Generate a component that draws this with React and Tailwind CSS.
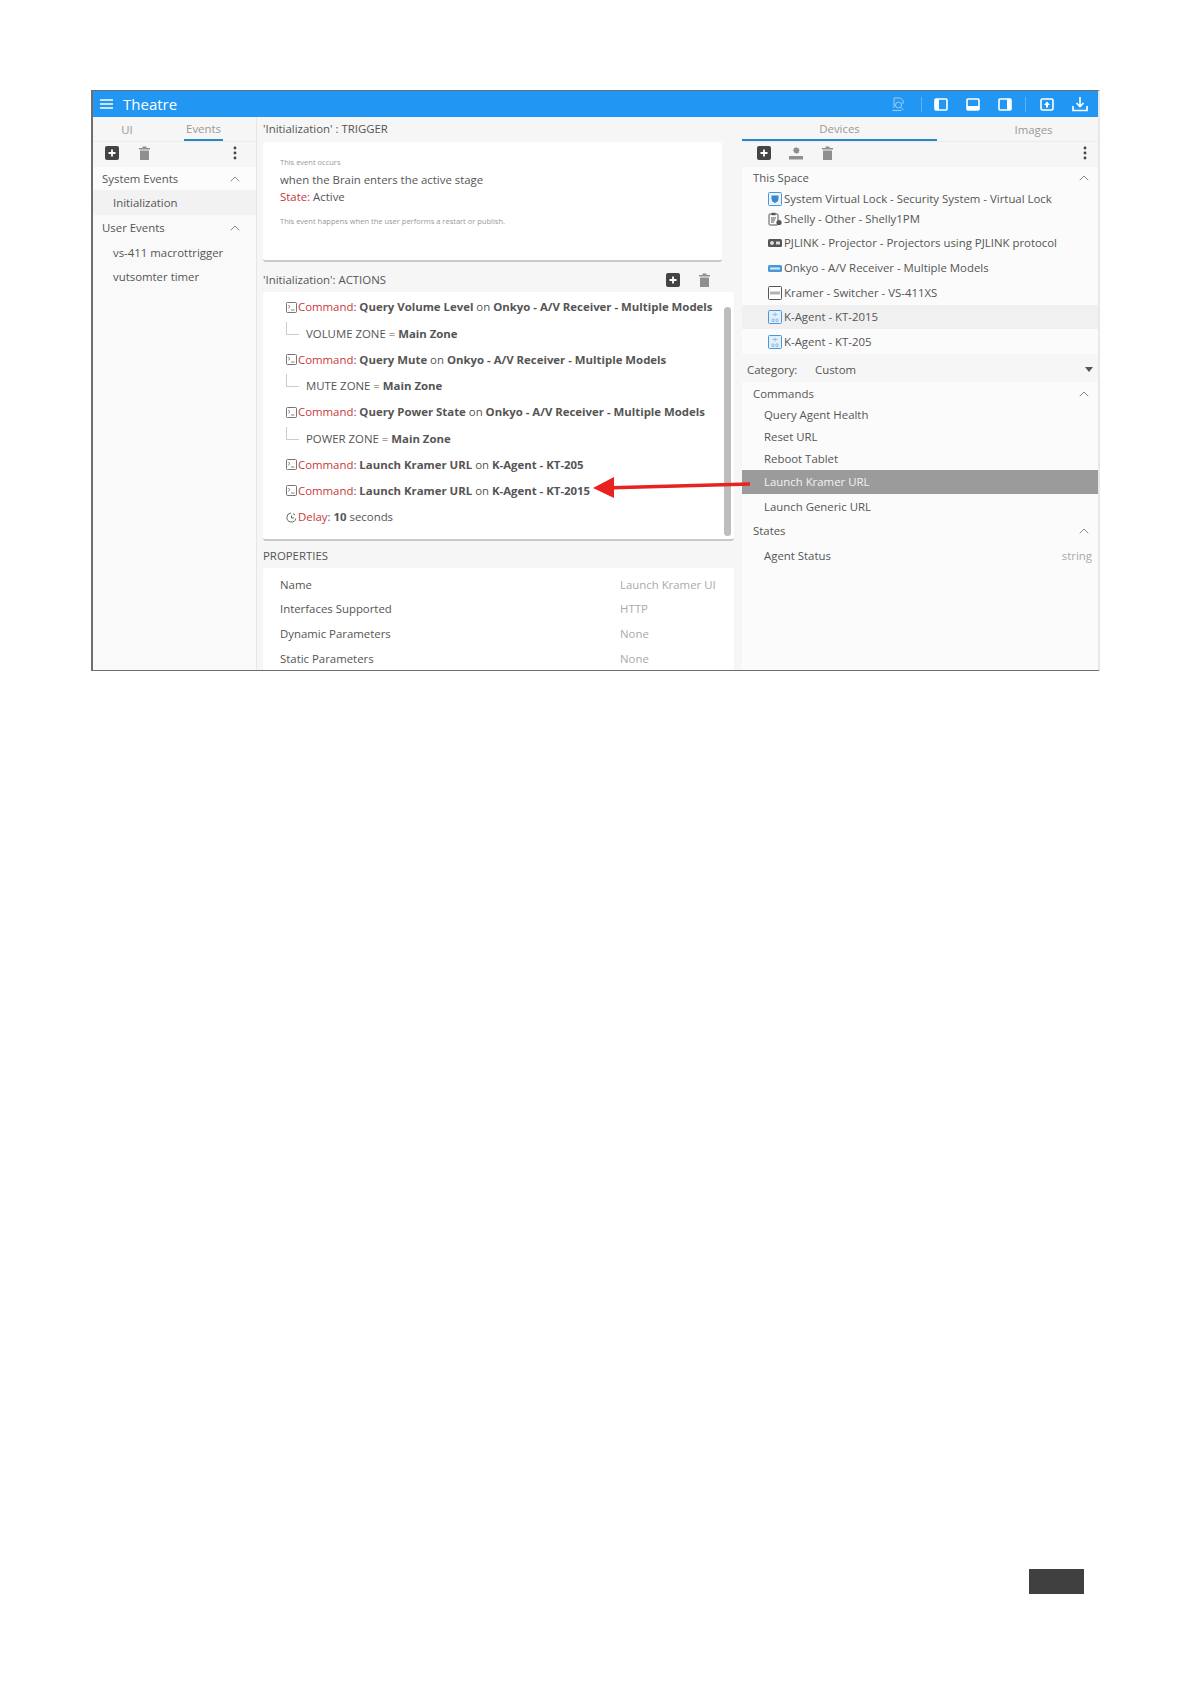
import React from "react";
import { ChevronUp } from "lucide-react";

const Plus = ({ cls = "" }) => (
  <svg width="14" height="14" viewBox="0 0 14 14" className={cls}>
    <rect width="14" height="14" rx="2" fill="#444" />
    <path d="M7 3.5v7M3.5 7h7" stroke="#fff" strokeWidth="1.8" />
  </svg>
);
const Trash = () => (
  <svg width="11" height="14" viewBox="0 0 11 14">
    <path d="M0 2h11v1.5H0zM3.5 0.5h4V2h-4zM1 4.5h9V14H1z" fill="#8f8f8f" />
  </svg>
);
const Dots = () => (
  <svg width="4" height="14" viewBox="0 0 4 14">
    <circle cx="2" cy="2" r="1.4" fill="#444" />
    <circle cx="2" cy="7" r="1.4" fill="#444" />
    <circle cx="2" cy="12" r="1.4" fill="#444" />
  </svg>
);
const Chev = () => <ChevronUp size={16} strokeWidth={1.5} className="text-[#8a8a8a]" />;
const Term = () => (
  <svg width="11" height="11" viewBox="0 0 11 11" className="shrink-0">
    <rect x=".5" y=".5" width="10" height="10" rx="1" fill="none" stroke="#666" strokeWidth=".9" />
    <path d="M2.2 3.2l1.8 1.5-1.8 1.5" fill="none" stroke="#666" strokeWidth=".8" />
    <path d="M5 8h3.5" fill="none" stroke="#666" strokeWidth=".8" />
  </svg>
);
const Clock = () => (
  <svg width="11" height="11" viewBox="0 0 11 11" className="shrink-0">
    <path d="M9.8 6.5A4.5 4.5 0 1 1 5 1" fill="none" stroke="#666" />
    <path d="M7 1.5l2 1.5M5.5 3.5v2.5H8" fill="none" stroke="#666" />
  </svg>
);
const Branch = () => (
  <div className="w-[13px] h-[13px] border-l border-b border-[#ccc] shrink-0 -mt-[10px]" />
);

const Row = ({ children }) => (
  <div className="flex items-center h-[26.25px] whitespace-nowrap pl-[23px]">{children}</div>
);
const Cmd = ({ name, on }) => (
  <Row>
    <Term />
    <span className="ml-[1px] text-[#c8383a]">Command</span>
    <span>:&nbsp;</span>
    <b className="font-bold">{name}</b>
    <span>&nbsp;on&nbsp;</span>
    <b className="font-bold">{on}</b>
  </Row>
);
const Sub = ({ k }) => (
  <Row>
    <Branch />
    <span className="ml-[7px]">{k} = </span>
    <b className="font-bold">&nbsp;Main Zone</b>
  </Row>
);

const Head = ({ children, h = "h-[24px]" }) => (
  <div className={`flex items-center justify-between ${h} pl-[11px] pr-[6px]`}>
    <span>{children}</span>
    <Chev />
  </div>
);

const Dev = ({ icon, children, h, active }) => (
  <div className={`flex items-center pl-[26px] ${h} ${active ? "bg-[#f0f0f0]" : ""}`}>
    <span className="w-[14px] h-[14px] mr-[2px] flex items-center justify-center shrink-0">{icon}</span>
    <span className="whitespace-nowrap">{children}</span>
  </div>
);
const Shield = (
  <svg width="14" height="14" viewBox="0 0 14 14">
    <rect x=".5" y=".5" width="13" height="13" rx="1" fill="#eaf3fb" stroke="#4a97d8" />
    <path d="M3.5 3.5h7v3.5c0 2-1.7 3-3.5 4-1.8-1-3.5-2-3.5-4z" fill="#3f86c6" />
  </svg>
);
const Clip = (
  <svg width="14" height="14" viewBox="0 0 14 14">
    <rect x="1" y="2" width="9" height="11" rx="1" fill="none" stroke="#555" />
    <rect x="3.5" y=".8" width="4" height="2.4" fill="#555" />
    <path d="M3 6h5M3 8h4M3 10h3" stroke="#555" />
    <circle cx="11" cy="10.5" r="2.6" fill="#555" />
  </svg>
);
const Proj = (
  <svg width="14" height="8" viewBox="0 0 14 8">
    <rect width="14" height="8" rx="1.5" fill="#555" />
    <circle cx="4" cy="4" r="2" fill="#ddd" />
    <rect x="8" y="2.5" width="4" height="3" fill="#ddd" />
  </svg>
);
const Recv = (
  <svg width="14" height="7" viewBox="0 0 14 7">
    <rect width="14" height="7" rx="1.5" fill="#4a97d8" />
    <rect x="2" y="2.5" width="10" height="2" fill="#d7e9f7" />
  </svg>
);
const Sw = (
  <svg width="14" height="14" viewBox="0 0 14 14">
    <rect x=".5" y=".5" width="13" height="13" rx="1" fill="#fff" stroke="#555" />
    <path d="M3 5.5v3M5 5.5v3M7 5.5v3M9 5.5v3M11 5.5v3" stroke="#555" strokeWidth=".9" />
  </svg>
);
const Agent = (
  <svg width="14" height="14" viewBox="0 0 14 14">
    <rect x=".5" y=".5" width="13" height="13" rx="1" fill="#e3f0fa" stroke="#4a97d8" />
    <path d="M7 2.5v4M4.5 4.5h5M4 9h2v2.5H4zM8 9h2v2.5H8z" stroke="#8fbfe6" fill="none" />
  </svg>
);

const HdrIcon = ({ children }) => <span className="flex items-center justify-center">{children}</span>;

export default function App() {
  return (
    <div
      className="bg-white h-[1684px] pt-[90px] pl-[91px] text-[#555] text-[11.4px] leading-none overflow-hidden"
      style={{ fontFamily: '"Open Sans", "Noto Sans", sans-serif' }}
    >
      <div className="relative w-[1009px] h-[581px] border-t border-b border-l-2 border-[#6e6e6e] border-r-2 border-r-[#e8e8e8] bg-[#f6f6f6] flex flex-col overflow-hidden">
        <div className="h-[26px] bg-[#2196f3] flex items-center shrink-0 text-white">
          <svg width="13" height="10" viewBox="0 0 13 10" className="ml-[7px]">
            <path d="M0 1h13M0 5h13M0 9h13" stroke="#fff" strokeWidth="1.4" />
          </svg>
          <span className="ml-[10px] text-[15px]">Theatre</span>
          <div className="ml-auto flex items-center mr-[10px]">
            <HdrIcon>
              <svg width="15" height="15" viewBox="0 0 15 15">
                <path d="M3 1h6.5L12 3.5V7M3 1v10" fill="none" stroke="#9fd0f7" />
                <circle cx="7.5" cy="8" r="3" fill="none" stroke="#9fd0f7" />
                <path d="M10 10.5l2.5 2.5M1.5 13.5h9" stroke="#9fd0f7" />
              </svg>
            </HdrIcon>
            <span className="w-px h-[15px] bg-[#5fb3f6] ml-[15px] mr-[12px]" />
            <HdrIcon>
              <svg width="14" height="13" viewBox="0 0 14 13">
                <rect x="1" y="1" width="12" height="11" rx="1" fill="none" stroke="#fff" strokeWidth="1.6" />
                <rect x="1" y="1" width="4" height="11" fill="#fff" />
              </svg>
            </HdrIcon>
            <span className="w-[18px]" />
            <HdrIcon>
              <svg width="14" height="13" viewBox="0 0 14 13">
                <rect x="1" y="1" width="12" height="11" rx="1" fill="none" stroke="#fff" strokeWidth="1.6" />
                <rect x="1" y="8" width="12" height="4" fill="#fff" />
              </svg>
            </HdrIcon>
            <span className="w-[18px]" />
            <HdrIcon>
              <svg width="14" height="13" viewBox="0 0 14 13">
                <rect x="1" y="1" width="12" height="11" rx="1" fill="none" stroke="#fff" strokeWidth="1.6" />
                <rect x="9" y="1" width="4" height="11" fill="#fff" />
              </svg>
            </HdrIcon>
            <span className="w-px h-[15px] bg-[#5fb3f6] ml-[13px] mr-[14px]" />
            <HdrIcon>
              <svg width="14" height="13" viewBox="0 0 14 13">
                <rect x="1" y="1" width="12" height="11" rx="1.5" fill="none" stroke="#fff" strokeWidth="1.6" />
                <path d="M7 3.5L10 7H8v2.5H6V7H4z" fill="#fff" />
              </svg>
            </HdrIcon>
            <span className="w-[18px]" />
            <HdrIcon>
              <svg width="16" height="16" viewBox="0 0 16 16">
                <path d="M8 1v9M4.5 7L8 10.5 11.5 7M1 10v4.5h14V10" fill="none" stroke="#fff" strokeWidth="1.6" />
              </svg>
            </HdrIcon>
          </div>
        </div>

        <div className="flex flex-1 min-h-0">
          {/* left */}
          <div className="w-[164px] shrink-0 flex flex-col border-r border-[#e6e6e6] bg-[#f9f9f9]">
            <div className="h-[25px] flex bg-[#f6f6f6] border-b border-[#ececec] text-[#999]">
              <div className="w-[68px] flex items-center justify-center pt-[2px]">UI</div>
              <div className="ml-[23px] flex items-center justify-center w-[39px] pt-[2px] border-b-2 border-[#2b86c8]">Events</div>
            </div>
            <div className="h-[25px] bg-[#f6f6f6] flex items-center pl-[12px] pr-[19px] pb-[3px]">
              <Plus />
              <span className="ml-[20px]"><Trash /></span>
              <span className="ml-auto"><Dots /></span>
            </div>
            <div className="h-[23px] flex items-center justify-between pl-[9px] pr-[13px] bg-[#fcfcfc]">
              <span>System Events</span><Chev />
            </div>
            <div className="h-[25px] flex items-center pl-[20px] bg-[#f2f2f2]">Initialization</div>
            <div className="h-[25px] flex items-center justify-between pl-[9px] pr-[13px]">
              <span>User Events</span><Chev />
            </div>
            <div className="h-[25px] flex items-center pl-[20px]">vs-411 macrottrigger</div>
            <div className="h-[24px] flex items-center pl-[20px]">vutsomter timer</div>
          </div>

          {/* center */}
          <div className="w-[478px] shrink-0 pl-[6px] flex flex-col">
            <div className="h-[25px] flex items-center pb-[2px] shrink-0">'Initialization' : TRIGGER</div>
            <div className="w-[459px] h-[120px] bg-white rounded-[3px] border-b-2 border-[#c9c9c9] pl-[17px] pt-[15px] shrink-0">
              <div className="text-[7.5px] text-[#999] leading-[10px]">This event occurs</div>
              <div className="mt-[5px] leading-[15px]">when the Brain enters the active stage</div>
              <div className="mt-[2px] leading-[15px]"><span className="text-[#c8383a]">State:</span> Active</div>
              <div className="mt-[12px] text-[7.5px] text-[#999] leading-[10px]">This event happens when the user performs a restart or publish.</div>
            </div>
            <div className="h-[30px] flex items-center w-[472px] shrink-0 pt-[5px]">
              <span>'Initialization': ACTIONS</span>
              <span className="ml-auto mr-[25px] flex items-center gap-[19px]"><Plus /><Trash /></span>
            </div>
            <div className="relative w-[471px] h-[249px] shrink-0 bg-white border-b-2 border-[#c9c9c9] rounded-[3px] pt-[2px]">
              <Cmd name="Query Volume Level" on="Onkyo - A/V Receiver - Multiple Models" />
              <Sub k="VOLUME ZONE" />
              <Cmd name="Query Mute" on="Onkyo - A/V Receiver - Multiple Models" />
              <Sub k="MUTE ZONE" />
              <Cmd name="Query Power State" on="Onkyo - A/V Receiver - Multiple Models" />
              <Sub k="POWER ZONE" />
              <Cmd name="Launch Kramer URL" on="K-Agent - KT-205" />
              <Cmd name="Launch Kramer URL" on="K-Agent - KT-2015" />
              <Row>
                <Clock />
                <span className="ml-[1px] text-[#c8383a]">Delay</span>
                <span>:&nbsp;</span>
                <b className="font-bold">10</b>
                <span>&nbsp;seconds</span>
              </Row>
              <div className="absolute right-[3px] top-[15px] bottom-[3px] w-[7px] rounded-full bg-[#bdbdbd]" />
            </div>
            <div className="h-[27px] flex items-center shrink-0 pt-[2px]">PROPERTIES</div>
            <div className="w-[471px] flex-1 bg-white rounded-t-[3px] px-[17px] pt-[4px] min-h-0">
              {[
                ["Name", "Launch Kramer UI"],
                ["Interfaces Supported", "HTTP"],
                ["Dynamic Parameters", "None"],
                ["Static Parameters", "None"],
              ].map(([a, b]) => (
                <div key={a} className="flex h-[24.7px] items-center">
                  <span className="w-[340px]">{a}</span>
                  <span className="text-[#aaa] whitespace-nowrap">{b}</span>
                </div>
              ))}
            </div>
          </div>

          {/* right */}
          <div className="w-[357px] shrink-0 ml-[7px] flex flex-col bg-[#fbfbfb] border-r border-[#f0f0f0]">
            <div className="h-[25px] flex bg-[#f6f6f6] border-b border-[#ececec] text-[#999] shrink-0">
              <div className="w-[195px] flex items-center justify-center pt-[2px] border-b-2 border-[#2b86c8]">Devices</div>
              <div className="flex-1 flex items-center justify-center pl-[32px] pt-[2px]">Images</div>
            </div>
            <div className="h-[25px] bg-[#f6f6f6] flex items-center pl-[15px] pr-[11px] pb-[3px] shrink-0">
              <Plus />
              <svg width="14" height="14" viewBox="0 0 14 14" className="ml-[18px]">
                <path d="M7 1l1 1 1.5-.3.3 1.5 1 1-1 1 .3 1.5-1.5.3-1 1-1-1-1.5-.3-.3-1.5-1-1 1-1 .3-1.5L6 2z" fill="#8f8f8f" />
                <rect y="10" width="14" height="3.5" fill="#8f8f8f" />
              </svg>
              <span className="ml-[19px]"><Trash /></span>
              <span className="ml-auto"><Dots /></span>
            </div>
            <Head h="h-[22px]">This Space</Head>
            <Dev icon={Shield} h="h-[19px]">System Virtual Lock - Security System - Virtual Lock</Dev>
            <Dev icon={Clip} h="h-[22px]">Shelly - Other - Shelly1PM</Dev>
            <Dev icon={Proj} h="h-[26px]">PJLINK - Projector - Projectors using PJLINK protocol</Dev>
            <Dev icon={Recv} h="h-[24px]">Onkyo - A/V Receiver - Multiple Models</Dev>
            <Dev icon={Sw} h="h-[25px]">Kramer - Switcher - VS-411XS</Dev>
            <Dev icon={Agent} h="h-[24px]" active>K-Agent - KT-2015</Dev>
            <Dev icon={Agent} h="h-[25px]">K-Agent - KT-205</Dev>
            <div className="h-[28px] pt-[3px] bg-[#f6f6f6] flex items-center pl-[5px] pr-[5px] shrink-0">
              <span className="w-[68px]">Category:</span>
              <span>Custom</span>
              <svg width="8" height="5" viewBox="0 0 8 5" className="ml-auto"><path d="M0 0h8L4 5z" fill="#555" /></svg>
            </div>
            <Head h="h-[23px]">Commands</Head>
            <div className="h-[20px] flex items-center pl-[22px]">Query Agent Health</div>
            <div className="h-[23px] flex items-center pl-[22px]">Reset URL</div>
            <div className="h-[22px] flex items-center pl-[22px]">Reboot Tablet</div>
            <div className="h-[24px] flex items-center pl-[22px] bg-[#9b9b9b] text-[#f2f2f2]">Launch Kramer URL</div>
            <div className="h-[25px] flex items-center pl-[22px]">Launch Generic URL</div>
            <Head h="h-[24px]">States</Head>
            <div className="h-[25px] flex items-center justify-between pl-[22px] pr-[6px]">
              <span>Agent Status</span>
              <span className="text-[#aaa]">string</span>
            </div>
          </div>
        </div>

        <svg width="160" height="24" viewBox="0 0 160 24" className="absolute left-[498px] top-[385px]">
          <path d="M12 12 L159 8" stroke="#e8231f" strokeWidth="3.6" />
          <path d="M2 12 L23 1 L23 22 Z" fill="#e8231f" />
        </svg>
      </div>

      <div className="mt-[898px] ml-[938px] w-[55px] h-[25px] bg-[#404040]" />
    </div>
  );
}
